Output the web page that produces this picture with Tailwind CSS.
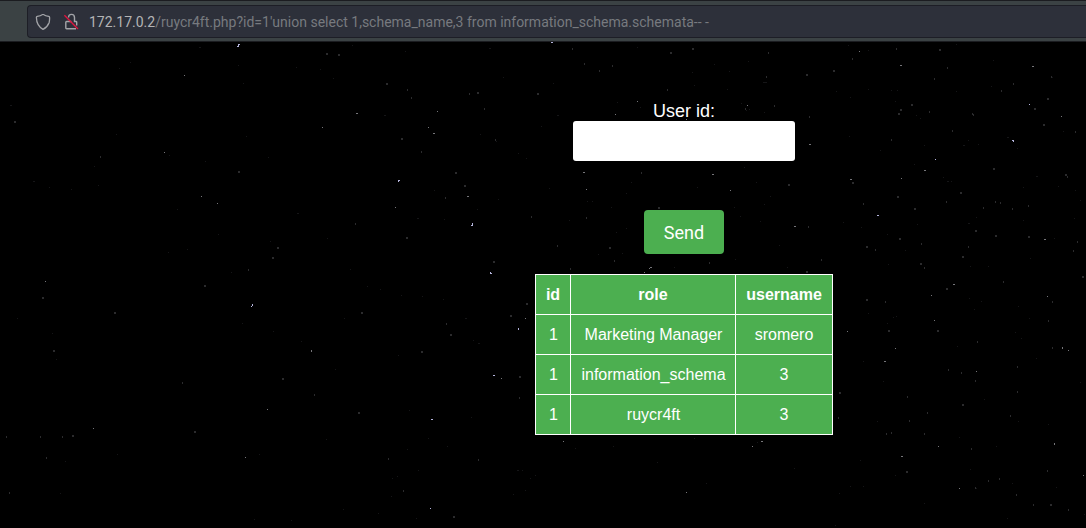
<!DOCTYPE html>
<html lang="en">
<head>
<meta charset="utf-8">
<title>User lookup</title>
<script src="https://cdn.jsdelivr.net/npm/@tailwindcss/browser@4"></script>
</head>
<body class="flex h-screen flex-col overflow-hidden bg-black font-['Liberation_Sans',sans-serif] text-white">
<header class="flex h-[42px] shrink-0 border-y border-[#1b1c20] bg-[#3b4244] pt-1 pb-[3px] pl-[27px]">
  <div class="flex h-[33px] flex-1 items-center rounded-l border border-r-0 border-[#1d1e26] bg-[#2d303a] pl-[7px]">
    <svg class="h-4 w-4 shrink-0" viewBox="0 0 16 16" fill="none" stroke="#a3a4a8" stroke-width="1.3" stroke-linejoin="round"><path d="M8 .3C6 1.800 4.200 2.300 2.300 2.400Q1.400 2.500 1.400 3.600C1.500 8.900 3.500 12.900 8 15.400Q12.500 12.900 14.200 8.400 14.700 5.900 14.600 3.600 14.600 2.500 13.700 2.400C11.800 2.300 10 1.800 8 .3Z"/></svg>
    <svg class="ml-[13px] h-4 w-4 shrink-0 overflow-visible" viewBox="0 0 16 16" fill="none"><path d="M4.500 3.500A3 3.100 0 0 1 10.500 3.500V7.500H12Q12.700 7.500 12.700 8.200V11.500M7.300 7.500H2.600Q1.800 7.500 1.800 8.300V14.100Q1.800 14.800 2.600 14.800H12" stroke="#a3a4a8" stroke-width="1.400"/><path d="M.4 1.200 14 15" stroke="#e2143f" stroke-width="1.300"/></svg>
    <p class="ml-[9px] font-[Roboto,sans-serif] text-sm leading-5 whitespace-pre text-[#777a7f]"><span class="text-[#b4b4b5]">172.17.0.2</span>/ruycr4ft.php?id=1'union select 1,schema_name,3 from information_schema.schemata-- -</p>
  </div>
</header>
<main class="relative flex-1 overflow-hidden">
  <!-- Starfield, grouped by brightness -->
  <svg class="absolute inset-0 h-[486px] w-[1086px]" viewBox="0 42 1086 486" fill="none" shape-rendering="crispEdges">
    <path stroke="#b4b4dc" stroke-width="1" d="M238 45.500h1M237 46.500h2M238 44.500h2M398 180.500h2M398 181.500h1M472 223.500h1M472 224.500h1M471 225.500h2M490 272.500h1M490 273.500h2M252 305.500h1M252 304.500h1M251 306.500h1M493 375.500h2M518 328.500h1M518 329.500h1M551 42.500h2M431 419.500h2M430 508.500h1M877 215.500h2M1012 140.500h2M1013 141.500h1M1029 104.500h1M935 159.500h1"/>
    <path stroke="#757579" stroke-width="1" d="M184 75.500h1M164 152.500h1M201 196.500h1M217 203.500h1M356 113.500h2M437 111.500h1M428 127.500h1M433 133.500h2M395 207.500h1M467 196.500h2M322 127.500h1M45 281.500h1M93 428.500h1M267 409.500h1M245 457.500h1M311 350.500h1M311 351.500h1M583 172.500h2M586 189.500h1M712 174.500h2M730 190.500h1M809 144.500h2M794 226.500h2M637 101.500h1M615 114.500h1M686 119.500h1M747 105.500h1M650 267.500h2M649 268.500h1M644 272.500h1M859 51.500h1M900 65.500h2M1032 66.500h2M850 179.500h2M924 170.500h2M901 178.500h1M914 208.500h2M1044 239.500h2M1061 116.500h1M953 284.500h2M931 295.500h1M934 320.500h1M895 348.500h1M884 361.500h2M847 331.500h1M1047 296.500h1M1062 347.500h1M1062 348.500h1M1068 350.500h1M976 371.500h1M938 446.500h1M901 456.500h2M1054 443.500h1M1054 444.500h1M959 488.500h1M451 335.500h1M525 318.500h1M501 378.500h1M1083 475.500h1"/>
    <path stroke="#2b2b2d" stroke-width="2" d="M14 122h2M100 157h1M238 172h2M277 248h2M272 258h2M248 270h1M42 298h2M204 286h2M114 313h2M53 351h2M182 383h1M6 437h1M40 437h1M62 437h1M72 436h2M46 458h1M194 432h2M9 493h1M326 54h2M338 55h2M386 84h2M411 98h1M401 139h2M421 152h1M407 90h1M469 94h1M477 93h2M484 109h1M537 94h2M495 140h1M455 173h2M464 186h2M445 198h1M406 238h2M355 224h1M493 262h2M531 217h1M557 246h1M361 313h2M421 352h2M450 335h2M510 316h2M526 304h2M446 324h1M519 377h2M519 398h1M358 413h2M282 379h2M314 395h1M388 459h1M478 460h1M403 491h1M453 517h2M572 49h1M670 53h2M692 49h2M612 66h1M584 64h1M599 71h1M667 90h1M806 75h2M833 71h2M766 77h1M768 53h1M745 109h1M809 117h1M774 106h1M641 173h1M788 185h2M658 208h2M586 218h1M808 227h1M609 248h2M614 261h1M709 263h1M570 269h1M806 272h2M821 260h1M939 50h2M896 49h1M852 59h1M947 68h1M934 79h1M1001 91h1M1013 84h1M1051 77h1M911 105h2M1047 99h2M900 110h2M898 114h2M972 114h1M973 115h1M929 112h1M1034 109h2M1043 125h2M1075 132h1M891 140h1M952 131h1M993 169h2M1065 175h2M1067 177h1M852 183h2M960 193h2M897 197h2M914 209h2M946 202h1M995 202h1M1000 203h1M1028 206h1M1012 209h1M983 208h1M863 204h1M975 231h2M995 236h2M1028 237h2M899 239h2M866 247h2M968 247h1M921 244h1M920 264h2M962 257h2M875 250h1M924 268h1M1077 242h1M1073 251h1M1082 277h2M946 289h2M1003 282h1M866 300h2M885 302h1M937 331h2M888 331h2M977 342h1M948 370h1M961 373h1M1017 367h1M975 381h1M1017 392h1M962 405h2M907 397h1M927 413h1M909 421h1M1010 416h1M924 434h1M891 433h1M886 434h1M839 393h2M838 418h1M906 472h2M971 449h1M999 479h1M988 481h1M1047 471h1M1050 505h2M1016 495h1M1068 510h1M1033 505h1M975 488h1M1048 321h1M1052 302h1M1052 348h1"/>
    <path stroke="#151517" stroke-width="1" d="M199 47.500h2M130 62.500h1M119 68.500h1M238 65.500h1M243 83.500h1M10 105.500h2M116 134.500h1M94 166.500h1M33 181.500h2M49 187.500h1M71 189.500h1M98 185.500h1M169 155.500h1M177 209.500h1M218 234.500h1M168 252.500h1M187 249.500h1M270 241.500h1M268 157.500h1M205 161.500h1M246 136.500h1M231 272.500h1M17 318.500h1M52 333.500h1M56 359.500h1M242 323.500h1M273 331.500h1M117 454.500h1M259 454.500h1M65 461.500h1M60 493.500h1M254 519.500h1M352 45.500h1M405 51.500h1M489 48.500h2M296 67.500h1M320 69.500h1M333 78.500h1M384 115.500h2M503 77.500h1M553 83.500h1M557 115.500h2M541 126.500h1M480 134.500h1M496 141.500h1M526 158.500h1M518 153.500h1M549 188.500h1M477 209.500h1M498 199.500h1M434 190.500h1M417 218.500h2M444 219.500h1M297 213.500h2M327 238.500h1M350 269.500h1M367 286.500h1M380 289.500h1M401 295.500h1M443 299.500h1M422 296.500h1M344 318.500h1M465 318.500h2M473 340.500h1M478 343.500h2M301 341.500h1M398 355.500h1M335 369.500h1M409 410.500h1M471 417.500h1M428 438.500h1M447 446.500h1M407 449.500h1M326 439.500h1M418 470.500h1M392 478.500h1M397 476.500h1M343 509.500h1M416 518.500h1M391 496.500h1M517 470.500h2M522 470.500h1M530 478.500h1M535 475.500h1M513 494.500h1M525 490.500h1M637 47.500h1M714 64.500h1M748 61.500h1M729 71.500h1M692 72.500h1M763 82.500h4M727 89.500h1M694 85.500h1M617 102.500h1M640 107.500h1M741 103.500h1M746 110.500h1M749 109.500h1M764 112.500h1M744 167.500h1M631 182.500h1M697 187.500h1M756 182.500h1M626 193.500h1M587 201.500h1M592 201.500h1M611 207.500h1M734 207.500h1M764 204.500h1M770 196.500h1M569 220.500h1M616 232.500h1M626 228.500h1M740 216.500h1M760 221.500h1M779 245.500h1M598 254.500h1M622 253.500h1M674 267.500h1M735 259.500h1M787 267.500h1M848 45.500h1M868 50.500h1M956 44.500h1M993 60.500h1M1052 77.500h1M836 91.500h1M850 97.500h1M868 89.500h1M891 90.500h1M897 90.500h1M956 91.500h1M991 86.500h1M916 115.500h1M920 118.500h1M895 101.500h1M849 136.500h1M880 150.500h1M924 145.500h1M963 145.500h2M968 140.500h1M978 144.500h1M1017 148.500h1M1007 137.500h2M1063 131.500h1M914 164.500h1M943 177.500h1M947 181.500h2M951 181.500h1M1023 187.500h1M1036 176.500h2M1058 186.500h1M1075 190.500h1M976 217.500h1M968 223.500h2M917 224.500h1M843 222.500h1M861 227.500h1M887 234.500h1M905 250.500h1M888 264.500h1M970 266.500h1M1030 258.500h1M988 266.500h1M1023 220.500h1M1054 238.500h1M1074 218.500h1M1080 200.500h1M868 313.500h1M893 317.500h1M896 316.500h1M887 323.500h1M969 298.500h1M981 301.500h1M974 309.500h1M1018 306.500h1M1029 318.500h1M1015 332.500h1M1021 338.500h1M863 361.500h1M957 346.500h1M883 381.500h1M984 399.500h1M877 421.500h1M1018 421.500h1M1048 424.500h1M1080 382.500h1M1036 358.500h1M959 437.500h1M860 460.500h1M996 446.500h1M970 469.500h1M895 475.500h1M850 486.500h1M839 493.500h1M863 486.500h1M924 503.500h1M835 525.500h1M1007 518.500h1M976 488.500h1M1012 483.500h1M1056 487.500h1M1084 514.500h1M291 520.500h1M378 513.500h1M575 448.500h1M613 446.500h1M694 438.500h1M657 462.500h1M706 483.500h1M757 442.500h1M794 468.500h1"/>
    <path stroke="#77777a" stroke-width="1" d="M761 441.500h2M752 446.500h1M686 492.500h1M563 441.500h1"/>
  </svg>
  <div class="relative ml-[282px] flex flex-col items-center pt-[59px]">
    <label for="uid" class="text-lg leading-5">User id:</label>
    <input id="uid" type="text" class="h-10 w-[222px] rounded-[3px] bg-white px-2 text-black">
    <button class="mt-[49px] h-11 w-20 rounded bg-[#4caf50] pt-0.5 font-[Roboto,sans-serif] text-lg">Send</button>
    <table class="mt-5 w-[298px] table-fixed border-collapse bg-[#4caf50] text-center text-base leading-5">
      <colgroup><col class="w-[35px]"><col class="w-[165px]"><col class="w-[97px]"></colgroup>
      <tr class="h-10"><th class="border border-white">id</th><th class="border border-white">role</th><th class="border border-white">username</th></tr>
      <tr class="h-10"><td class="border border-white pl-px">1</td><td class="border border-white pl-px">Marketing Manager</td><td class="border border-white">sromero</td></tr>
      <tr class="h-10"><td class="border border-white pl-px">1</td><td class="border border-white pl-px">information_schema</td><td class="border border-white">3</td></tr>
      <tr class="h-10"><td class="border border-white pl-px">1</td><td class="border border-white pl-px">ruycr4ft</td><td class="border border-white">3</td></tr>
    </table>
  </div>
</main>
</body>
</html>
